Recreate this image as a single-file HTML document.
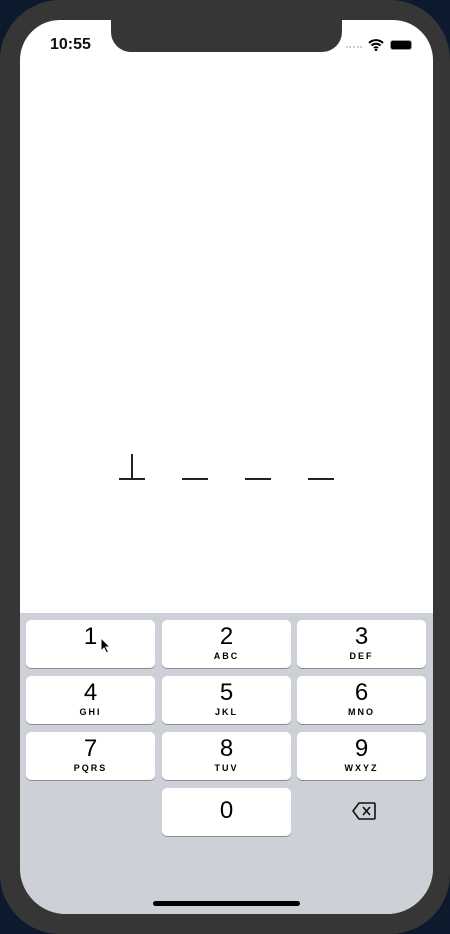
<!DOCTYPE html>
<html><head><style>
*{margin:0;padding:0;box-sizing:border-box}
body{width:450px;height:934px;background:#0d1a2e;position:relative;overflow:hidden;font-family:"Liberation Sans",sans-serif}
.phone{position:absolute;left:0;top:0;width:450px;height:934px;background:#363636;border-radius:60px}
.screen{position:absolute;left:20px;top:20px;width:413px;height:894px;background:#fff;border-radius:40px 40px 46px 46px;overflow:hidden}
.notch{position:absolute;left:91px;top:0;width:231px;height:32px;background:#363636;border-radius:0 0 20px 20px}
.time{position:absolute;left:30px;top:16px;font-size:16px;font-weight:bold;color:#111}
.kb{position:absolute;left:0;top:593px;width:413px;height:301px;background:#cdd0d6}
.k{position:absolute;width:129px;height:48px;background:#fff;border-radius:5px;box-shadow:0 1px 0 #8a8d93;text-align:center;color:#000}
.k .n{font-size:24px;line-height:24px;padding-top:5px;display:block}
.k .l{font-size:9px;font-weight:bold;letter-spacing:2px;display:block;margin-top:2px}
.d{position:absolute;top:458px;width:26px;height:2px;background:#222}
</style></head><body>
<div class="phone"></div>
<div class="screen">
<div class="notch"></div>
<div class="time">10:55</div>
<div style="position:absolute;left:326px;top:26px;width:16px;height:2px;border-top:2px dotted #ccc"></div>
<svg style="position:absolute;left:348px;top:18px" width="16" height="13" viewBox="0 0 16 13"><path d="M1 5a10 10 0 0 1 14 0M3.5 7.5a6.5 6.5 0 0 1 9 0M6 10a3 3 0 0 1 4 0" stroke="#000" stroke-width="2" fill="none"/><circle cx="8" cy="12" r="1.3"/></svg>
<div style="position:absolute;left:370px;top:20px;width:22px;height:10px;background:#000;border-radius:3px;border:1px solid #999"></div>
<div class="d" style="left:99px"></div><div style="position:absolute;left:111px;top:434px;width:2px;height:25px;background:#222"></div>
<div class="d" style="left:162px"></div><div class="d" style="left:225px"></div><div class="d" style="left:288px"></div>
<div class="kb">
<div class="k" style="left:6px;top:7px"><span class="n" style="padding-top:5px">1</span></div>
<div class="k" style="left:142px;top:7px"><span class="n">2</span><span class="l">ABC</span></div>
<div class="k" style="left:277px;top:7px"><span class="n">3</span><span class="l">DEF</span></div>
<div class="k" style="left:6px;top:63px"><span class="n">4</span><span class="l">GHI</span></div>
<div class="k" style="left:142px;top:63px"><span class="n">5</span><span class="l">JKL</span></div>
<div class="k" style="left:277px;top:63px"><span class="n">6</span><span class="l">MNO</span></div>
<div class="k" style="left:6px;top:119px"><span class="n">7</span><span class="l">PQRS</span></div>
<div class="k" style="left:142px;top:119px"><span class="n">8</span><span class="l">TUV</span></div>
<div class="k" style="left:277px;top:119px"><span class="n">9</span><span class="l">WXYZ</span></div>
<div class="k" style="left:142px;top:175px"><span class="n" style="padding-top:11px">0</span></div>
<svg style="position:absolute;left:332px;top:189px" width="24" height="18" viewBox="0 0 24 18"><path d="M7 1H22a1 1 0 0 1 1 1V16a1 1 0 0 1-1 1H7L1 9Z" stroke="#111" stroke-width="1.6" fill="none" stroke-linejoin="round"/><path d="M11 5l7 8M18 5l-7 8" stroke="#111" stroke-width="1.6"/></svg>
<div style="position:absolute;left:133px;top:288px;width:147px;height:5px;background:#000;border-radius:3px"></div>
</div>
<svg style="position:absolute;left:80px;top:617px" width="12" height="18" viewBox="0 0 12 18"><path d="M1 1V14L4 11L6.5 16L8.5 15L6 10H10Z" fill="#000" stroke="#fff" stroke-width="1"/></svg>
</div>
</body></html>
